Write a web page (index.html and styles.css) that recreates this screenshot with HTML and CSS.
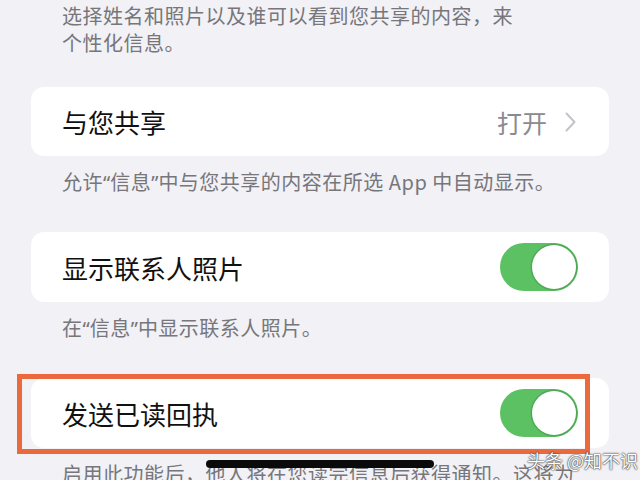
FILE: index.html
```html
<!DOCTYPE html>
<html lang="zh-CN">
<head>
<meta charset="utf-8">
<title>信息设置</title>
<link rel="stylesheet" href="styles.css">
</head>
<body>
<div class="screen">
  <p class="note note-top">选择姓名和照片以及谁可以看到您共享的内容，来<br>个性化信息。</p>

  <div class="card card-first">
    <span class="label">与您共享</span>
    <span class="value">打开
      <svg class="chevron" width="11" height="20" viewBox="0 0 11 20"><polyline points="1.5,1.5 9.5,10 1.5,18.5" fill="none" stroke="#c4c4c8" stroke-width="2" stroke-linecap="round" stroke-linejoin="round"/></svg>
    </span>
  </div>
  <p class="note">允许<span class="q">“</span>信息<span class="q">”</span>中与您共享的内容在所选 App 中自动显示。</p>

  <div class="card">
    <span class="label">显示联系人照片</span>
    <span class="toggle"><span class="knob"></span></span>
  </div>
  <p class="note">在<span class="q">“</span>信息<span class="q">”</span>中显示联系人照片。</p>

  <div class="card card-marked">
    <span class="label">发送已读回执</span>
    <span class="toggle"><span class="knob"></span></span>
    <span class="highlight"></span>
  </div>
  <p class="note">启用此功能后，他人将在您读完信息后获得通知。这将为</p>

  <div class="home-bar"></div>
  <div class="watermark">头条 @知不识</div>
</div>
</body>
</html>
```

FILE: styles.css
```css
html, body {
  margin: 0;
  padding: 0;
}
body {
  background: #f1f1f6;
  font-family: "Noto Sans CJK SC", "Noto Sans", sans-serif;
  overflow: hidden;
}
.screen {
  position: relative;
  width: 640px;
  height: 480px;
  overflow: hidden;
  padding: 0 31px;
  box-sizing: border-box;
}
.note {
  margin: 12px 0 35px;
  padding-left: 31px;
  font-size: 20px;
  line-height: 28px;
  letter-spacing: 0.5px;
  color: #76767b;
  white-space: nowrap;
}
.note .q {
  font-family: "Noto Sans", sans-serif;
  letter-spacing: 0;
}
.note-top {
  margin: 2px 0 31px;
  line-height: 27px;
}
.card {
  position: relative;
  display: flex;
  align-items: center;
  justify-content: space-between;
  height: 70px;
  padding: 0 31px;
  background: #ffffff;
  border-radius: 13px;
}
.card-first {
  height: 69px;
  padding-right: 33px;
}
.label {
  font-size: 26px;
  color: #111111;
}
.value {
  display: flex;
  align-items: center;
  gap: 18px;
  font-size: 25px;
  color: #8a8a8f;
}
.chevron {
  display: block;
}
.toggle {
  position: relative;
  display: block;
  width: 78px;
  height: 48px;
  border-radius: 24px;
  background: #5cc163;
}
.knob {
  position: absolute;
  top: 2px;
  right: 2px;
  width: 44px;
  height: 44px;
  border-radius: 50%;
  background: #ffffff;
  box-shadow: 0 0 0 1.5px #4fa856;
}
.highlight {
  position: absolute;
  left: -14px;
  top: -4px;
  width: 573px;
  height: 80px;
  box-sizing: border-box;
  border: 5px solid #ea6a3d;
}
.home-bar {
  position: absolute;
  left: 206px;
  top: 460px;
  width: 228px;
  height: 8px;
  border-radius: 4px;
  background: #0a0a0a;
}
.watermark {
  position: absolute;
  left: 527px;
  top: 448px;
  font-size: 18px;
  line-height: 24px;
  color: #ffffff;
  text-shadow: 0 0 2px #222, 0 0 1px #222;
}
```
